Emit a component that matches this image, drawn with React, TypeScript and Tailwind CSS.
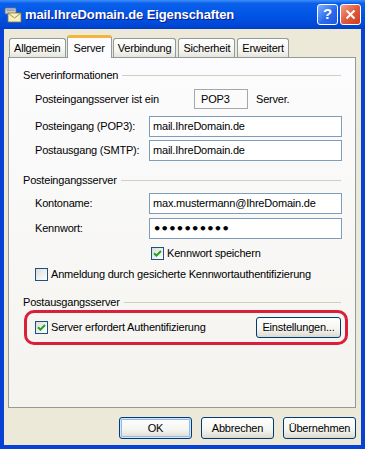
import React from "react";

function TitleIcon() {
  return (
    <svg width="18" height="16" viewBox="0 0 18 16">
      <rect x="1" y="1" width="11" height="6" rx="1" fill="#c9ccd2" stroke="#6b7280" strokeWidth="0.8" />
      <rect x="2.5" y="2.5" width="8" height="1.2" fill="#8a9099" />
      <rect x="4" y="6" width="13" height="9" fill="#f7efc0" stroke="#8a7a3a" strokeWidth="0.8" />
      <path d="M4 6 L10.5 11 L17 6" fill="none" stroke="#8a7a3a" strokeWidth="0.8" />
    </svg>
  );
}

function XpCheckbox({ checked }: { checked?: boolean }) {
  return (
    <span className="flex h-[13px] w-[13px] shrink-0 items-center justify-center border border-[#1c5180] bg-[linear-gradient(135deg,#dcdcd7,#ffffff)]">
      {checked && (
        <svg width="9" height="9" viewBox="0 0 9 9">
          <path d="M1 4.3 L3.4 6.7 L8 2" fill="none" stroke="#21a121" strokeWidth="2" />
        </svg>
      )}
    </span>
  );
}

function XpButton({ label, isDefault, className = "" }: { label: string; isDefault?: boolean; className?: string }) {
  return (
    <button
      className={`flex items-center justify-center rounded-[3px] border border-[#003c74] bg-[linear-gradient(to_bottom,#ffffff,#f4f4f0_60%,#dcd8cd)] text-[11px] text-black ${
        isDefault ? "shadow-[inset_0_0_0_1px_#cee7ff,inset_0_0_0_2px_#98b8ea]" : ""
      } ${className}`}
    >
      {label}
    </button>
  );
}

function GroupHeader({ title, className = "" }: { title: string; className?: string }) {
  return (
    <div className={`flex h-[13px] items-center px-[14px] ${className}`}>
      <span className="text-[11px] leading-[13px]">{title}</span>
      <div className="ml-[4px] h-px flex-1 bg-[#d0d0bf]" />
    </div>
  );
}

function TextField({ label, value, className = "" }: { label: string; value: React.ReactNode; className?: string }) {
  return (
    <div className={`flex items-center pl-[26px] ${className}`}>
      <span className="w-[114px] text-[11px]">{label}</span>
      <div className="flex h-[21px] w-[193px] items-center border border-[#7f9db9] bg-white pl-[3px] text-[11px]">
        {value}
      </div>
    </div>
  );
}

const tabs = ["Allgemein", "Server", "Verbindung", "Sicherheit", "Erweitert"];

export default function App() {
  return (
    <div className="flex h-[449px] w-[365px] flex-col bg-[#0842d4] pb-[4px] font-['Liberation_Sans',Arial,sans-serif] text-black">
      {/* title bar */}
      <div className="flex h-[29px] shrink-0 items-center bg-[linear-gradient(to_bottom,#3d8ffb,#0a5fea_12%,#0055e5_50%,#0048d8_85%,#003fc4)] pl-[4px] pr-[4px]">
        <TitleIcon />
        <span className="ml-[3px] text-[13px] font-bold tracking-[-0.1px] text-white [text-shadow:1px_1px_#0f1a89]">
          mail.IhreDomain.de Eigenschaften
        </span>
        <div className="ml-auto flex gap-[2px]">
          <div className="flex h-[21px] w-[21px] items-center justify-center rounded-[3px] border border-white bg-[linear-gradient(135deg,#7fb0ff,#2a6af0_55%,#1e57d8)] text-[15px] font-bold text-white">
            ?
          </div>
          <div className="flex h-[21px] w-[21px] items-center justify-center rounded-[3px] border border-white bg-[linear-gradient(135deg,#f3a08a,#e25a3c_50%,#c8401f)]">
            <svg width="11" height="11" viewBox="0 0 11 11">
              <path d="M1.5 1.5 L9.5 9.5 M9.5 1.5 L1.5 9.5" stroke="#ffffff" strokeWidth="2" />
            </svg>
          </div>
        </div>
      </div>

      {/* body */}
      <div className="mx-[4px] flex flex-1 flex-col bg-[#ece9d8] pl-[4px] pr-[5px] tracking-[-0.2px]">
        {/* tabs */}
        <div className="flex h-[28px] items-end gap-[2px] pl-[1px]">
          {tabs.map((t) =>
            t === "Server" ? (
              <div
                key={t}
                className="relative z-10 -mb-px -ml-[1px] -mr-[1px] flex h-[23px] items-center rounded-t-[3px] border-x border-[#919b9c] border-t-[3px] border-t-[#f5b43c] bg-[#fcfcfe] px-[6px] text-[11px]"
              >
                {t}
              </div>
            ) : (
              <div
                key={t}
                className="flex h-[19px] items-center rounded-t-[3px] border-x border-t border-[#919b9c] bg-[linear-gradient(to_bottom,#ffffff,#f3f3ef_70%,#e6e4db)] px-[4px] text-[11px]"
              >
                {t}
              </div>
            )
          )}
        </div>

        {/* tab panel */}
        <div className="flex h-[351px] flex-col border border-[#919b9c] bg-[linear-gradient(to_bottom,#fcfcfe,#f4f3ee)]">
          <GroupHeader title="Serverinformationen" className="mt-[11px]" />

          <div className="mt-[7px] flex h-[20px] items-center pl-[26px] text-[11px]">
            <span className="w-[159px]">Posteingangsserver ist ein</span>
            <div className="flex h-[20px] w-[54px] items-center border border-[#a7a6aa] pl-[6px]">POP3</div>
            <span className="ml-[8px]">Server.</span>
          </div>

          <TextField label="Posteingang (POP3):" value="mail.IhreDomain.de" className="mt-[7px]" />
          <TextField label="Postausgang (SMTP):" value="mail.IhreDomain.de" className="mt-[3px]" />

          <GroupHeader title="Posteingangsserver" className="mt-[13px]" />

          <TextField label="Kontoname:" value="max.mustermann@IhreDomain.de" className="mt-[6px]" />
          <TextField
            label="Kennwort:"
            value={
              <span className="font-['DejaVu_Sans',sans-serif] text-[13px] font-bold leading-none tracking-[-0.7px]">
                ••••••••••
              </span>
            }
            className="mt-[4px]"
          />

          <div className="mt-[8px] flex h-[13px] items-center gap-[3px] pl-[142px] text-[11px]">
            <XpCheckbox checked />
            <span>Kennwort speichern</span>
          </div>

          <div className="mt-[8px] flex h-[13px] items-center gap-[3px] pl-[26px] text-[11px]">
            <XpCheckbox />
            <span>Anmeldung durch gesicherte Kennwortauthentifizierung</span>
          </div>

          <GroupHeader title="Postausgangsserver" className="mt-[15px]" />

          <div className="ml-[15px] mt-[1px] flex h-[35px] w-[324px] items-center justify-between rounded-[10px] border-[3px] border-[#d9203a] pl-[8px] pr-[4px]">
            <div className="flex items-center gap-[3px] text-[11px]">
              <XpCheckbox checked />
              <span>Server erfordert Authentifizierung</span>
            </div>
            <XpButton label="Einstellungen..." className="h-[21px] w-[85px]" />
          </div>
        </div>

        {/* dialog buttons */}
        <div className="mt-[9px] flex justify-end gap-[9px]">
          <XpButton label="OK" isDefault className="h-[22px] w-[73px]" />
          <XpButton label="Abbrechen" className="h-[22px] w-[73px]" />
          <XpButton label="Übernehmen" className="h-[22px] w-[73px]" />
        </div>
      </div>
    </div>
  );
}
